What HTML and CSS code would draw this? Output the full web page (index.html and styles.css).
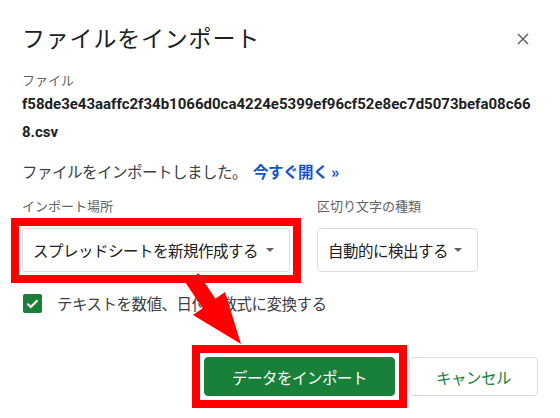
FILE: index.html
```html
<!DOCTYPE html>
<html lang="ja">
<head>
<meta charset="utf-8">
<title>ファイルをインポート</title>
<link rel="stylesheet" href="styles.css">
</head>
<body>
<div class="dialog">
  <div class="header">
    <h1 class="title">ファイルをインポート</h1>
    <button class="close" aria-label="閉じる">
      <svg width="12" height="12" viewBox="0 0 12 12"><path d="M1 1L11 11M11 1L1 11" stroke="#5f6368" stroke-width="1.5" fill="none"/></svg>
    </button>
  </div>
  <div class="label file-label jp">ファイル</div>
  <div class="filename">f58de3e43aaffc2f34b1066d0ca4224e5399ef96cf52e8ec7d5073befa08c668.csv</div>
  <p class="message jp">ファイルをインポートしました。 <a class="link">今すぐ開く »</a></p>
  <div class="options">
    <div class="field">
      <div class="label jp">インポート場所</div>
      <div class="frame frame-select">
        <div class="select select-wide jp"><span>スプレッドシートを新規作成する</span><span class="caret"></span></div>
      </div>
    </div>
    <div class="field">
      <div class="label jp">区切り文字の種類</div>
      <div class="select select-narrow jp"><span>自動的に検出する</span><span class="caret"></span></div>
    </div>
  </div>
  <div class="check-row">
    <span class="checkbox"><svg width="19" height="19" viewBox="0 0 19 19"><path d="M4.5 9.8L7.8 13L14.5 6.2" stroke="#fff" stroke-width="2.2" fill="none"/></svg></span>
    <span class="check-text jp">テキストを数値、日付、数式に変換する</span>
  </div>
  <div class="actions">
    <div class="frame frame-btn">
      <button class="btn primary jp">データをインポート</button>
    </div>
    <button class="btn secondary jp">キャンセル</button>
  </div>
</div>
<svg class="annotation" width="560" height="418" viewBox="0 0 560 418">
  <polygon points="198.4,273.2 215.4,298.7 225,292 241,344 193,315 202.6,308.3 185.6,282.8" fill="#ff0000"/>
</svg>
</body>
</html>
```
FILE: styles.css
```css
html, body {
  margin: 0;
  background: #ffffff;
}
body {
  position: relative;
  width: 560px;
  height: 418px;
  overflow: hidden;
  font-family: Roboto, "Noto Sans CJK JP", sans-serif;
  color: #3c4043;
}
.jp {
  font-family: "Noto Sans CJK JP", sans-serif;
  font-size: 15.5px;
  letter-spacing: -0.5px;
}
.dialog {
  padding: 21px 22px 0 22px;
}
.header {
  display: flex;
  justify-content: space-between;
  align-items: center;
  height: 32px;
}
.title {
  margin: 0;
  font-family: "Noto Sans CJK JP", sans-serif;
  font-size: 23px;
  font-weight: 400;
  letter-spacing: 0.8px;
  line-height: 32px;
  color: #202124;
}
.close {
  width: 24px;
  height: 24px;
  margin-right: 3px;
  margin-top: 4px;
  padding: 0;
  border: 0;
  background: none;
  display: flex;
  align-items: center;
  justify-content: center;
}
.label.jp {
  font-size: 13px;
  letter-spacing: 0;
  line-height: 20px;
  color: #5f6368;
  white-space: nowrap;
}
.file-label {
  margin-top: 17px;
}
.filename {
  max-width: 512px;
  margin-top: 0;
  font-family: Roboto, sans-serif;
  font-weight: 700;
  font-size: 15px;
  line-height: 28px;
  color: #202124;
  word-break: break-all;
}
.message {
  margin: 13px 0 0;
  line-height: 24px;
  color: #3c4043;
}
.link {
  color: #1155cc;
  font-weight: 700;
  text-decoration: none;
  margin-left: 3px;
}
.options {
  display: flex;
  gap: 27px;
  margin-top: 13px;
}
.field {
  display: flex;
  flex-direction: column;
  gap: 12px;
}
.select {
  box-sizing: border-box;
  height: 44px;
  display: flex;
  align-items: center;
  justify-content: space-between;
  padding: 0 15px 0 10px;
  border: 1px solid #dadce0;
  border-radius: 4px;
  color: #202124;
  white-space: nowrap;
  background: #ffffff;
}
.select-wide {
  width: 268px;
}
.select-narrow {
  width: 161px;
}
.caret {
  width: 0;
  height: 0;
  border-left: 4px solid transparent;
  border-right: 4px solid transparent;
  border-top: 4px solid #5f6368;
}
.frame {
  border: 8px solid #ff0000;
}
.frame-select {
  padding: 2px 3px 3px 3px;
  margin: -10px -11px -11px -11px;
}
.frame-btn {
  padding: 4px;
  margin: -12px;
  display: flex;
}
.check-row {
  display: flex;
  align-items: center;
  gap: 15px;
  margin-top: 21px;
  height: 20px;
}
.checkbox {
  width: 19px;
  height: 19px;
  margin-left: 1px;
  border-radius: 2px;
  background: #188038;
  display: flex;
}
.check-text {
  line-height: 20px;
  color: #3c4043;
}
.actions {
  display: flex;
  justify-content: flex-end;
  gap: 14px;
  margin-top: 44px;
}
.btn {
  box-sizing: border-box;
  height: 39px;
  border-radius: 4px;
  padding: 0;
}
.primary {
  width: 191px;
  background: #188038;
  border: 1px solid #188038;
  color: #ffffff;
}
.secondary {
  width: 129px;
  background: #ffffff;
  border: 1px solid #dadce0;
  color: #188038;
}
.annotation {
  position: absolute;
  left: 0;
  top: 0;
  pointer-events: none;
}
```
